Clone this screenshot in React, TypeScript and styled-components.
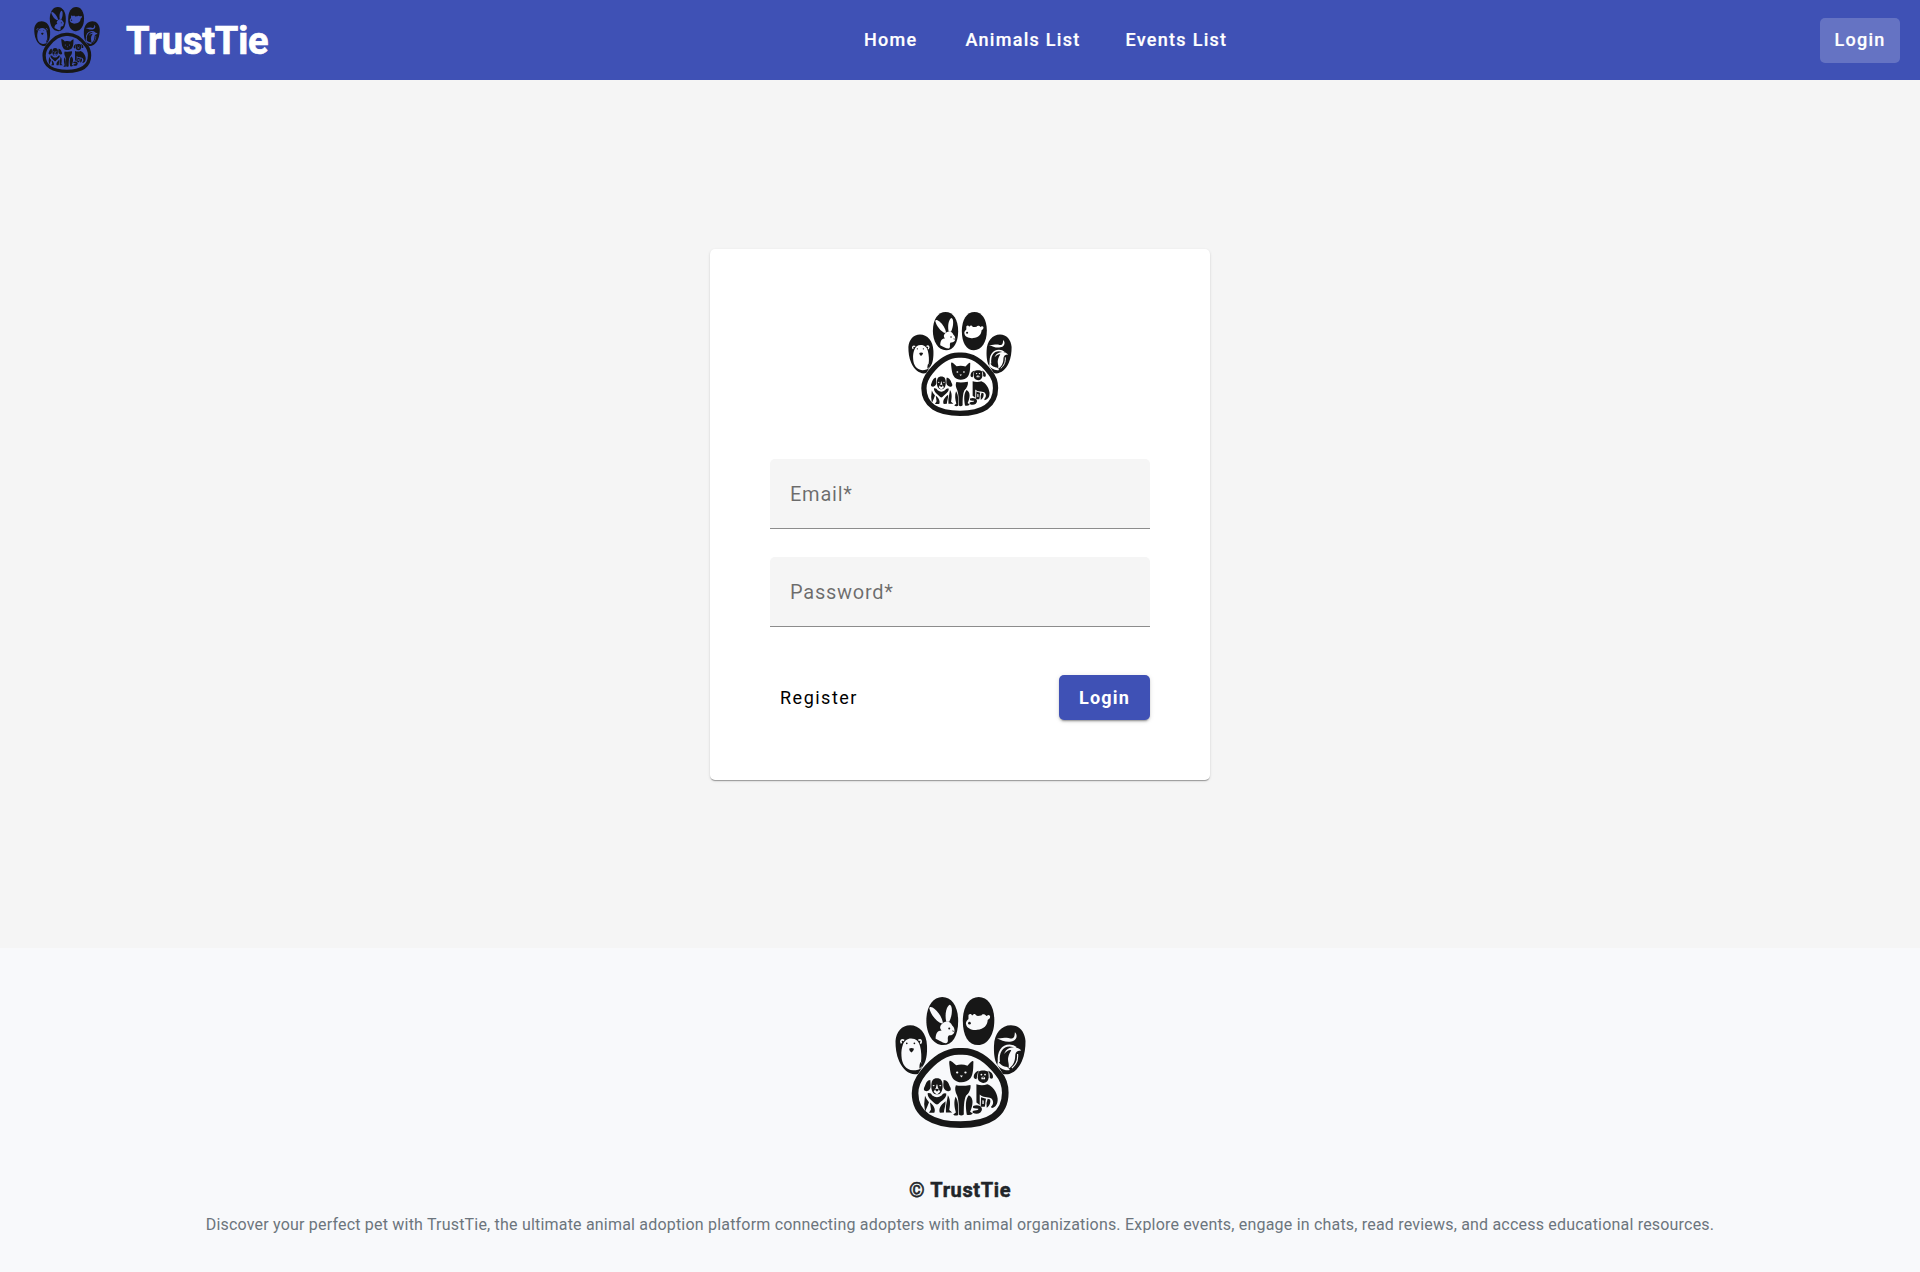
import React from "react";
import styled, { createGlobalStyle } from "styled-components";

const GlobalStyle = createGlobalStyle`
  *, *::before, *::after { box-sizing: border-box; }
  body { margin: 0; font-family: Roboto, "Liberation Sans", sans-serif; background: #f5f5f5; }
  button, input { font-family: inherit; }
`;

const Page = styled.div`
  display: flex;
  flex-direction: column;
  height: 1272px;
`;

const Header = styled.header`
  display: flex;
  justify-content: space-between;
  align-items: center;
  flex: none;
  height: 80px;
  padding: 0 20px 0 34px;
  background: #3f51b5;
  color: #fff;
`;

const Brand = styled.a`
  display: flex;
  align-items: center;
  gap: 26px;
`;

const BrandName = styled.span`
  padding: 1px 3px 0 0;
  font-size: 38px;
  font-weight: 700;
  line-height: 48px;
  letter-spacing: -0.2px;
  -webkit-text-stroke: 0.7px currentColor;
`;

const Nav = styled.nav`
  display: flex;
  gap: 45px;
`;

const NavLink = styled.a`
  font-size: 18px;
  font-weight: 500;
  line-height: 24px;
  letter-spacing: 1.28px;
  -webkit-text-stroke: 0.2px currentColor;

  &:first-child {
    margin-right: 3px;
  }
`;

const HeaderLogin = styled.button`
  width: 80px;
  height: 45px;
  padding: 0 0 2px;
  border: 0;
  border-radius: 5px;
  background: rgba(255, 255, 255, 0.2);
  color: #fff;
  font-size: 18px;
  font-weight: 500;
  letter-spacing: 1.25px;
  -webkit-text-stroke: 0.2px currentColor;
`;

const Main = styled.main`
  display: flex;
  flex: 1;
  justify-content: center;
  align-items: center;
  padding-top: 1px;
`;

const Card = styled.form`
  display: flex;
  flex-direction: column;
  align-items: center;
  width: 500px;
  height: 531px;
  padding: 63px 60px 60px;
  border-radius: 5px;
  background: #fff;
  box-shadow: 0 2px 1px -1px rgba(0, 0, 0, 0.2), 0 1px 1px rgba(0, 0, 0, 0.14), 0 1px 3px rgba(0, 0, 0, 0.12);
`;

const Fields = styled.div`
  display: flex;
  flex-direction: column;
  gap: 28px;
  width: 100%;
  margin-top: 43px;
`;

const Field = styled.label`
  display: flex;
  align-items: center;
  height: 70px;
  padding: 0 20px;
  border-bottom: 1px solid #8c8c8c;
  border-radius: 5px 5px 0 0;
  background: #f5f5f5;
  color: rgba(0, 0, 0, 0.56);
  font-size: 20px;
  letter-spacing: 0.75px;
`;

const Actions = styled.div`
  display: flex;
  justify-content: space-between;
  width: 100%;
  margin-top: 48px;
`;

const Button = styled.button<{ $primary?: boolean }>`
  height: 45px;
  padding: 0 ${(p) => (p.$primary ? 20 : 10)}px;
  border: 0;
  border-radius: 5px;
  background: ${(p) => (p.$primary ? "#3f51b5" : "transparent")};
  color: ${(p) => (p.$primary ? "#fff" : "#000")};
  font-size: 18px;
  font-weight: ${(p) => (p.$primary ? 700 : 400)};
  letter-spacing: ${(p) => (p.$primary ? 1.2 : 1.5)}px;
  box-shadow: ${(p) =>
    p.$primary
      ? "0 3px 1px -2px rgba(0,0,0,.2), 0 2px 2px rgba(0,0,0,.14), 0 1px 5px rgba(0,0,0,.12)"
      : "none"};
`;

const Footer = styled.footer`
  display: flex;
  flex-direction: column;
  align-items: center;
  flex: none;
  height: 324px;
  padding-top: 49px;
  background: #f8f9fb;
`;

const Copyright = styled.strong`
  margin-top: 50px;
  color: #212529;
  font-size: 20px;
  font-weight: 700;
  line-height: 24px;
  letter-spacing: 0.62px;
  -webkit-text-stroke: 0.5px currentColor;
`;

const Tagline = styled.p`
  margin: 11px 0 0;
  color: #6c757d;
  font-size: 16px;
  line-height: 24px;
  letter-spacing: 0.196px;
  white-space: nowrap;
`;

const LogoSvg = styled.svg`
  display: block;
  flex: none;
`;

/* Paw print with animals cut out of the toes and palm; ground is the colour behind it. */
function PawLogo({ size, ground }: { size: number; ground: string }) {
  const ink = "#171717";
  return (
    <LogoSvg width={size} height={size} viewBox="45 36 392 395" fill={ink} role="img" aria-label="TrustTie">
      {/* toes */}
      <path d="M186 36C215 36 234 65 234 108C234 153 217 181 188 181C158 181 138 148 138 107C138 64 158 36 186 36Z" />
      <path d="M296 36C324 36 343 64 343 107C343 149 323 181 294 181C265 181 248 153 248 108C248 65 267 36 296 36Z" />
      <path d="M89 121C117 121 139 145 140 183C141 208 138 231 128 243L113 268C90 274 68 257 56 230C47 210 45 188 45 169C47 141 64 121 89 121Z" />
      <path d="M393 121C418 121 435 141 437 169C437 188 435 210 426 230C414 257 392 274 369 268L354 243C344 231 341 208 342 183C343 145 365 121 393 121Z" />

      {/* bear */}
      <path fill={ground} d="M92 161C107 161 116 170 119 184C123 200 124 218 122 232C132 246 122 257 98 257C76 256 64 238 63 214C62 200 64 190 67 181C71 168 80 161 92 161Z" />
      <path fill="none" stroke={ground} strokeWidth="5" d="M63 176C58 168 64 163 71 167M114 167C121 162 126 168 120 177" />
      <circle cx="79" cy="176" r="2.5" />
      <circle cx="102" cy="176" r="2.5" />
      <path d="M86 192Q93 188 101 192Q99 200 93 203Q87 200 86 192Z" />
      <path d="M120 232L129 241L117 252Q116 243 120 232Z" />

      {/* rabbit */}
      <g fill={ground}>
        <path d="M185 116C168 111 151 88 147 70C148 63 157 67 163 72C176 83 185 98 188 113Z" />
        <path d="M198 111C193 88 198 65 208 59C218 60 217 91 207 111Z" />
        <path d="M184 118C195 105 210 108 216 122C224 128 226 144 217 149C212 153 205 150 204 154C200 162 207 169 199 175C188 176 180 168 166 162C166 147 171 137 184 137C178 132 178 123 184 118Z" />
      </g>
      <circle cx="207" cy="131" r="3" />
      <path d="M216 136L223 139L218 141Z" />

      {/* hamster */}
      <path fill={ground} d="M265 94C264 88 272 84 276 92C281 86 285 85 289 92C294 95 300 91 304 92C306 86 315 87 319 93C321 94 325 87 330 93C331 101 327 102 323 105C322 122 312 132 291 135C280 138 260 132 258 119C255 112 262 105 265 102Z" />
      <circle cx="268" cy="115" r="4" />

      {/* crescent and bird */}
      <path fill={ground} d="M405 142C415 151 410 169 394 170C380 174 364 166 351 161C367 162 379 156 391 161C404 162 404 153 405 142Z" />
      <path fill="none" stroke={ground} strokeWidth="6" d="M357 232C353 202 367 182 389 182C397 182 403 184 408 189" />
      <path fill={ground} d="M378 197C391 185 411 184 424 197C412 197 406 203 406 213C406 232 397 247 385 252C390 240 382 230 385 218C387 207 391 202 394 197C388 194 382 199 372 208Z" />
      <path fill="none" stroke={ground} strokeWidth="3.5" d="M413 208C415 226 407 241 396 250" />
      <path fill={ground} d="M354 226C359 241 371 246 382 247L390 256C374 260 359 250 352 240Z" />

      {/* palm */}
      <path fill={ground} stroke={ink} strokeWidth="20" d="M241 200C289 197 327 229 355 266C368 281 376 300 376 325C376 391 325 421 241 421C158 421 104 391 104 326C104 300 115 281 129 264C154 233 193 197 241 200Z" />

      {/* cat */}
      <path d="M210 228C206 227 207 235 208 244C210 258 210 271 220 284C232 297 258 297 271 281C281 267 279 245 280 231C279 226 272 232 262 243C250 239 239 239 228 242C219 233 213 229 210 228Z" />
      <g fill={ground}>
        <ellipse cx="231" cy="264" rx="3.5" ry="3" />
        <ellipse cx="256" cy="264" rx="3.5" ry="3" />
        <path d="M239 273H248L244 279Z" />
      </g>
      <path d="M227 302Q244 306 271 301C273 313 267 325 258 333C251 346 251 371 251 390Q243 397 236 390C236 365 236 348 231 334C225 321 223 313 227 302Z" />
      <path d="M226 337C236 350 234 373 234 392Q226 396 219 390L227 384C223 368 220 353 226 337Z" />
      <path d="M266 332C282 340 279 362 270 382L278 387Q271 394 260 391C256 366 255 345 266 332Z" />

      {/* puppy */}
      <path d="M150 286C140 286 137 296 133 306C128 315 131 320 139 320C148 318 152 311 151 302Z" />
      <path d="M190 286C201 286 206 296 209 306C215 315 211 321 203 320C193 318 189 311 189 302Z" />
      <path d="M170 281C182 281 187 289 187 304C187 320 181 329 170 330C159 329 153 320 153 304C153 289 158 281 170 281Z" />
      <path fill={ground} d="M169 300H171L173 310L180 322L170 331L160 322L167 310Z" />
      <ellipse cx="160" cy="303" rx="3" ry="2" fill={ground} />
      <ellipse cx="180" cy="303" rx="3" ry="2" fill={ground} />
      <path d="M164 314Q170 311 176 314Q174 320 170 321Q166 320 164 314Z" />
      <path d="M142 326Q152 324 156 333Q170 344 184 333Q189 324 198 327C200 341 184 348 174 359Q170 362 166 359C156 348 141 341 142 326Z" />
      <path d="M134 334Q138 345 146 353L141 366L134 382Q129 359 134 334Z" />
      <path d="M149 354C160 361 167 376 162 385H146L152 375Z" />
      <path d="M179 385C174 374 181 361 196 350C197 363 191 374 191 384Z" />
      <path d="M203 332C213 347 209 366 207 377L216 384H197V366Z" />

      {/* dog */}
      <path d="M295 261C302 256 319 256 325 262L326 279C325 289 319 295 310 295C300 294 293 288 293 278Z" />
      <path d="M281 279C280 267 288 260 296 258C291 265 292 277 289 284Q283 284 281 279Z" />
      <path d="M324 258C335 261 342 272 338 281Q331 284 329 279C330 270 328 264 324 258Z" />
      <g fill={ground}>
        <circle cx="304" cy="270" r="2.7" />
        <circle cx="315" cy="270" r="2.7" />
        <path d="M304 279L309 276L315 279V284H304Z" />
      </g>
      <path d="M306 278H313L309.5 282Z" />
      <path d="M289 299Q306 305 322 299C337 304 351 322 353 342C354 358 347 369 335 371L333 367C342 359 341 347 333 341C323 337 308 340 299 330V362L289 354Z" />
      <path fillRule="evenodd" d="M303 338L318 343C315 352 317 361 314 367H302ZM307 347V359H311V348Z" />
      <path d="M323 343L330 345C333 352 329 364 320 370Q317 356 323 343Z" />
      <path d="M279 365Q290 360 300 365Q311 374 301 384Q291 392 278 385Q275 379 284 378Q295 378 295 373Q287 373 279 371Z" />
    </LogoSvg>
  );
}

export default function App() {
  return (
    <Page>
      <GlobalStyle />
      <Header>
        <Brand>
          <PawLogo size={66} ground="#3f51b5" />
          <BrandName>TrustTie</BrandName>
        </Brand>
        <Nav>
          <NavLink>Home</NavLink>
          <NavLink>Animals List</NavLink>
          <NavLink>Events List</NavLink>
        </Nav>
        <HeaderLogin>Login</HeaderLogin>
      </Header>
      <Main>
        <Card>
          <PawLogo size={104} ground="#fff" />
          <Fields>
            <Field>Email*</Field>
            <Field>Password*</Field>
          </Fields>
          <Actions>
            <Button type="button">Register</Button>
            <Button type="button" $primary>Login</Button>
          </Actions>
        </Card>
      </Main>
      <Footer>
        <PawLogo size={131} ground="#f8f9fb" />
        <Copyright>© TrustTie</Copyright>
        <Tagline>
          Discover your perfect pet with TrustTie, the ultimate animal adoption platform connecting adopters with
          animal organizations. Explore events, engage in chats, read reviews, and access educational resources.
        </Tagline>
      </Footer>
    </Page>
  );
}
